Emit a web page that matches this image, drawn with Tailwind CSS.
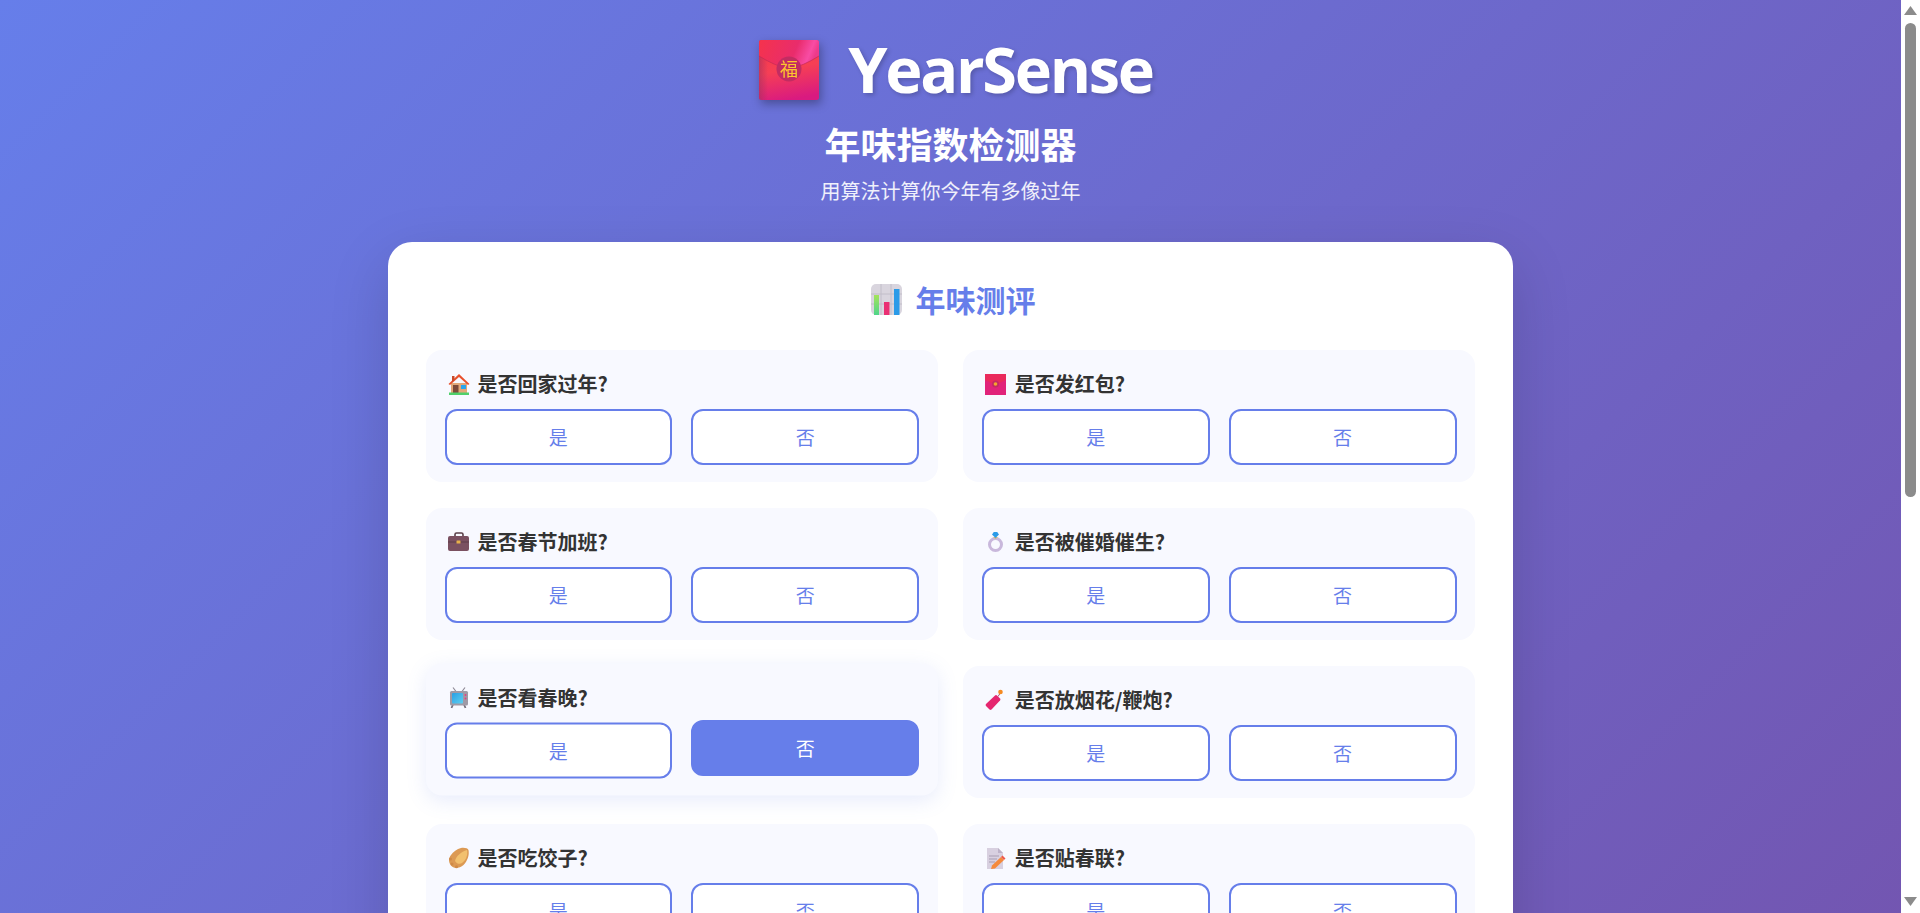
<!DOCTYPE html>
<html lang="zh-CN">
    <head>
        <meta charset="UTF-8" />
        <meta name="viewport" content="width=device-width, initial-scale=1.0" />
        <title>YearSense</title>
        <script src="https://cdn.jsdelivr.net/npm/@tailwindcss/browser@4"></script>
    </head>
    <body class="h-[913px] overflow-hidden bg-white font-['Noto_Sans_CJK_SC',sans-serif]">
        <svg width="0" height="0" class="absolute">
            <defs>
                <linearGradient id="envBody" x1="0.3" y1="0" x2="0.5" y2="1">
                    <stop offset="0" stop-color="#f8384a" />
                    <stop offset="0.5" stop-color="#f63f55" />
                    <stop offset="1" stop-color="#d91a80" />
                </linearGradient>
                <linearGradient id="envFlap" x1="0" y1="0" x2="1" y2="0.2">
                    <stop offset="0" stop-color="#f5334c" />
                    <stop offset="0.65" stop-color="#e92c6c" />
                    <stop offset="0.9" stop-color="#f84ca4" />
                    <stop offset="1" stop-color="#ee3a8a" />
                </linearGradient>
                <linearGradient id="envEdge" x1="0" y1="0" x2="1" y2="0">
                    <stop offset="0" stop-color="#a03060" stop-opacity="0.55" />
                    <stop offset="1" stop-color="#a03060" stop-opacity="0" />
                </linearGradient>
                <linearGradient id="barGreen" x1="0" y1="0" x2="0" y2="1">
                    <stop offset="0" stop-color="#a4e35a" />
                    <stop offset="1" stop-color="#4fd58a" />
                </linearGradient>
                <linearGradient id="screenBlue" x1="0" y1="0" x2="1" y2="1">
                    <stop offset="0" stop-color="#2a9fe4" />
                    <stop offset="1" stop-color="#5fd0f0" />
                </linearGradient>
            </defs>
        </svg>
        <div class="flex h-[913px] overflow-hidden">
            <main class="flex-1 min-w-0 overflow-hidden">
                <div class="min-h-[1670px] bg-[linear-gradient(135deg,#667eea_0%,#764ba2_100%)] pt-[33px]">
                    <header class="flex flex-col items-center">
                        <div class="flex h-[74px] items-center pl-[11px]">
                            <svg class="w-[60px] h-[60px] drop-shadow-[2px_4px_5px_rgba(0,0,0,0.3)]" viewBox="0 0 60 60">
                                <rect width="60" height="60" rx="2.500" fill="url(#envBody)" />
                                <rect width="9" height="60" rx="2.500" fill="url(#envEdge)" />
                                <path d="M0 2.500A2.500 2.500 0 0 1 2.500 0h55A2.500 2.500 0 0 1 60 2.500V16Q44 26 30 29 16 26 0 16z" fill="url(#envFlap)" />
                                <path d="M0 16Q16 26 30 29 44 26 60 16" fill="none" stroke="#c42a55" stroke-width="0.7" />
                                <circle cx="30" cy="29" r="12.500" fill="#c22c62" />
                                <text x="30" y="36" text-anchor="middle" font-size="18" fill="#fcc72e" font-family="Noto Sans CJK SC">福</text>
                            </svg>
                            <h1 class="mb-[3px] ml-[29px] font-['Open_Sans',sans-serif] text-[63px] leading-[74px] font-bold tracking-[-2.3px] text-white [text-shadow:2px_2px_4px_rgba(0,0,0,0.2)]">YearSense</h1>
                        </div>
                        <h2 class="mt-[11px] h-[51px] text-[36px] leading-[51px] font-bold text-white">年味指数检测器</h2>
                        <p class="mt-[7px] h-[30px] text-[20px] leading-[30px] text-white/90">用算法计算你今年有多像过年</p>
                    </header>

                    <section class="mx-auto mt-[36px] w-[1125px] min-h-[1300px] rounded-[24px] bg-white p-[38px] shadow-[0_20px_60px_rgba(0,0,0,0.15)]">
                        <h3 class="mb-[32px] flex h-[38px] items-center justify-center gap-[14px] pl-[5px] text-[30px] font-bold text-[#667eea]">
                            <svg class="w-[31px] h-[31px]" viewBox="0 0 31 31">
                                <rect width="31" height="31" rx="5" fill="#d9d5de" />
                                <path d="M0 10h31M0 20h31M10 0v31M20 0v31" stroke="#c2bec9" stroke-width="1" />
                                <path d="M3 11h5v20H3z" fill="url(#barGreen)" />
                                <path d="M13 18h5.500v13H13z" fill="#ea2f73" />
                                <path d="M23 5h5.500v26H23z" fill="#2a9be8" />
                            </svg>
                            <span>年味测评</span>
                        </h3>

                        <div class="grid grid-cols-2 gap-x-[25.6px] gap-y-[26px]">
                            <div class="rounded-[16px] bg-[#f8f9ff] px-[18.5px] pt-[19px] pb-[17px]">
                                <div class="mb-[11px] flex h-[29px] items-center text-[20px] font-bold text-[#333]">
                                    <svg class="ml-[3px] mr-[8px] w-[22px] h-[22px]" viewBox="0 0 22 22">
                                        <path d="M3 21V10h16v11z" fill="#e3a878" />
                                        <path d="M0.500 11L11 1l10.500 10-1.500 1L11 4 2 12z" fill="#e8502c" />
                                        <path d="M4 3h2.500v4L4 9z" fill="#c94a2a" />
                                        <path d="M5 12h5.500v8.500H5z" fill="#7c4a3a" />
                                        <path d="M13 12h5v4h-5z" fill="#2ba6ee" />
                                        <path d="M1 19.500h20V22H1z" fill="#4fd06a" />
                                    </svg>
                                    <span>是否回家过年?</span>
                                </div>
                                <div class="grid grid-cols-2 gap-[19.2px]">
                                    <button class="h-[56px] rounded-[12px] border-2 border-[#667eea] bg-white text-[19px] text-[#667eea]">是</button>
                                    <button class="h-[56px] rounded-[12px] border-2 border-[#667eea] bg-white text-[19px] text-[#667eea]">否</button>
                                </div>
                            </div>
                            <div class="rounded-[16px] bg-[#f8f9ff] px-[18.5px] pt-[19px] pb-[17px]">
                                <div class="mb-[11px] flex h-[29px] items-center text-[20px] font-bold text-[#333]">
                                    <svg class="ml-[3px] mr-[8px] w-[22px] h-[22px]" viewBox="0 0 22 22">
                                        <rect y="1" width="21" height="21" fill="#e1237a" />
                                        <path d="M0 1h21v6l-10.500 5L0 7z" fill="#ea2a5c" />
                                        <circle cx="10.500" cy="11" r="3.500" fill="#c22c62" />
                                        <circle cx="10.500" cy="11" r="1.800" fill="#f5a62c" />
                                    </svg>
                                    <span>是否发红包?</span>
                                </div>
                                <div class="grid grid-cols-2 gap-[19.2px]">
                                    <button class="h-[56px] rounded-[12px] border-2 border-[#667eea] bg-white text-[19px] text-[#667eea]">是</button>
                                    <button class="h-[56px] rounded-[12px] border-2 border-[#667eea] bg-white text-[19px] text-[#667eea]">否</button>
                                </div>
                            </div>
                            <div class="rounded-[16px] bg-[#f8f9ff] px-[18.5px] pt-[19px] pb-[17px]">
                                <div class="mb-[11px] flex h-[29px] items-center text-[20px] font-bold text-[#333]">
                                    <svg class="ml-[3px] mr-[8px] w-[22px] h-[22px]" viewBox="0 0 22 22">
                                        <path d="M7 6V3.500A1.500 1.500 0 0 1 8.500 2h5A1.500 1.500 0 0 1 15 3.500V6" fill="none" stroke="#5a3f48" stroke-width="1.600" />
                                        <rect y="5" width="21" height="15" rx="2" fill="#7a5060" />
                                        <path d="M0 11h21" stroke="#5c3d49" stroke-width="1" />
                                        <rect x="8.500" y="9.500" width="4" height="3" rx="0.500" fill="#e8b04a" />
                                    </svg>
                                    <span>是否春节加班?</span>
                                </div>
                                <div class="grid grid-cols-2 gap-[19.2px]">
                                    <button class="h-[56px] rounded-[12px] border-2 border-[#667eea] bg-white text-[19px] text-[#667eea]">是</button>
                                    <button class="h-[56px] rounded-[12px] border-2 border-[#667eea] bg-white text-[19px] text-[#667eea]">否</button>
                                </div>
                            </div>
                            <div class="rounded-[16px] bg-[#f8f9ff] px-[18.5px] pt-[19px] pb-[17px]">
                                <div class="mb-[11px] flex h-[29px] items-center text-[20px] font-bold text-[#333]">
                                    <svg class="ml-[3px] mr-[8px] w-[22px] h-[22px]" viewBox="0 0 22 22">
                                        <circle cx="10.500" cy="13.500" r="6" fill="none" stroke="#c9b8dc" stroke-width="3" />
                                        <path d="M8 6h5l-2.500 2z" fill="#d8b868" />
                                        <path d="M7 3.500L8.800 1h3.400L14 3.500l-3.500 3.500z" fill="#2a9be8" />
                                    </svg>
                                    <span>是否被催婚催生?</span>
                                </div>
                                <div class="grid grid-cols-2 gap-[19.2px]">
                                    <button class="h-[56px] rounded-[12px] border-2 border-[#667eea] bg-white text-[19px] text-[#667eea]">是</button>
                                    <button class="h-[56px] rounded-[12px] border-2 border-[#667eea] bg-white text-[19px] text-[#667eea]">否</button>
                                </div>
                            </div>
                            <div class="-translate-y-[2.5px] rounded-[16px] bg-[#f8f9ff] px-[18.5px] pt-[19px] pb-[17px] shadow-[0_5px_20px_rgba(102,126,234,0.15)]">
                                <div class="mb-[11px] flex h-[29px] items-center text-[20px] font-bold text-[#333]">
                                    <svg class="ml-[3px] mr-[8px] w-[22px] h-[22px]" viewBox="0 0 22 22">
                                        <path d="M8 5L5 1M14 5l3-4" stroke="#8f8a96" stroke-width="1.200" fill="none" />
                                        <path d="M5 18l-1.500 3.500M16 18l1.500 3.500" stroke="#77727e" stroke-width="1.800" fill="none" />
                                        <rect x="2" y="4.500" width="18" height="14.500" rx="1.500" fill="#9f9aa6" />
                                        <rect x="4" y="6.500" width="11" height="10.500" rx="1" fill="url(#screenBlue)" />
                                        <circle cx="17.500" cy="8.500" r="0.900" fill="#ec3a80" />
                                        <circle cx="17.500" cy="12" r="0.900" fill="#ec3a80" />
                                    </svg>
                                    <span>是否看春晚?</span>
                                </div>
                                <div class="grid grid-cols-2 gap-[19.2px]">
                                    <button class="h-[56px] rounded-[12px] border-2 border-[#667eea] bg-white text-[19px] text-[#667eea]">是</button>
                                    <button class="h-[56px] -translate-y-[2.5px] rounded-[12px] border-2 border-[#667eea] bg-[#667eea] text-[19px] text-white">否</button>
                                </div>
                            </div>
                            <div class="rounded-[16px] bg-[#f8f9ff] px-[18.5px] pt-[19px] pb-[17px]">
                                <div class="mb-[11px] flex h-[29px] items-center text-[20px] font-bold text-[#333]">
                                    <svg class="ml-[3px] mr-[8px] w-[22px] h-[22px]" viewBox="0 0 22 22">
                                        <path d="M1 15L10 6.500a1.500 1.500 0 0 1 2 0l3 3a1.500 1.500 0 0 1 0 2L6.500 20.500a1.500 1.500 0 0 1-2 0l-3.500-3.500a1.500 1.500 0 0 1 0-2z" fill="#e5266f" />
                                        <path d="M13 7.500l2-3" stroke="#b0526a" stroke-width="1" fill="none" />
                                        <circle cx="15.500" cy="3" r="2.300" fill="#f58a22" />
                                    </svg>
                                    <span>是否放烟花/鞭炮?</span>
                                </div>
                                <div class="grid grid-cols-2 gap-[19.2px]">
                                    <button class="h-[56px] rounded-[12px] border-2 border-[#667eea] bg-white text-[19px] text-[#667eea]">是</button>
                                    <button class="h-[56px] rounded-[12px] border-2 border-[#667eea] bg-white text-[19px] text-[#667eea]">否</button>
                                </div>
                            </div>
                            <div class="rounded-[16px] bg-[#f8f9ff] px-[18.5px] pt-[19px] pb-[17px]">
                                <div class="mb-[11px] flex h-[29px] items-center text-[20px] font-bold text-[#333]">
                                    <svg class="ml-[3px] mr-[8px] w-[22px] h-[22px]" viewBox="0 0 22 22">
                                        <path d="M8 21C4 21 1 17 1 13c0-2 1-4 2-5 2-3 6-6 10-7 3-.5 7 0 7.500 2 1 5-1 11-5 15-2 2-5 3-7.500 3z" fill="#dc9a54" />
                                        <path d="M7 14C8 9 13 5 19 3c1 5-1 10-5 13-2 1.500-5 1-7-2z" fill="#f2c06e" />
                                        <circle cx="2.500" cy="12" r="1.500" fill="#cf8a48" />
                                        <circle cx="4" cy="17" r="1.500" fill="#cf8a48" />
                                        <circle cx="8.500" cy="19.800" r="1.500" fill="#cf8a48" />
                                    </svg>
                                    <span>是否吃饺子?</span>
                                </div>
                                <div class="grid grid-cols-2 gap-[19.2px]">
                                    <button class="h-[56px] rounded-[12px] border-2 border-[#667eea] bg-white text-[19px] text-[#667eea]">是</button>
                                    <button class="h-[56px] rounded-[12px] border-2 border-[#667eea] bg-white text-[19px] text-[#667eea]">否</button>
                                </div>
                            </div>
                            <div class="rounded-[16px] bg-[#f8f9ff] px-[18.5px] pt-[19px] pb-[17px]">
                                <div class="mb-[11px] flex h-[29px] items-center text-[20px] font-bold text-[#333]">
                                    <svg class="ml-[3px] mr-[8px] w-[22px] h-[22px]" viewBox="0 0 22 22">
                                        <path d="M2 1h11l5 5v16H2z" fill="#d8d0e0" />
                                        <path d="M13 1l5 5h-5z" fill="#bdb2c8" />
                                        <path d="M4 9h10M4 12h8M4 15h6" stroke="#a89db2" stroke-width="1" />
                                        <path d="M6 22l1-3.500L16 10l3 3-9 8.500z" fill="#f58a3c" />
                                        <path d="M16 10l1.500-1.500 3 3L19 13z" fill="#ee5a4a" />
                                    </svg>
                                    <span>是否贴春联?</span>
                                </div>
                                <div class="grid grid-cols-2 gap-[19.2px]">
                                    <button class="h-[56px] rounded-[12px] border-2 border-[#667eea] bg-white text-[19px] text-[#667eea]">是</button>
                                    <button class="h-[56px] rounded-[12px] border-2 border-[#667eea] bg-white text-[19px] text-[#667eea]">否</button>
                                </div>
                            </div>
                        </div>
                    </section>
                </div>
            </main>

            <!-- page scrollbar as the screenshot shows it -->
            <aside class="flex w-[19px] shrink-0 flex-col items-center bg-white">
                <svg class="mt-[6px] w-[13px] h-[9px]" viewBox="0 0 13 9"><path d="M6.500 0L13 9H0z" fill="#8b8b8b" /></svg>
                <div class="mt-[8px] h-[474px] w-[11px] rounded-full bg-[#8b8b8b]"></div>
                <svg class="mt-auto mb-[7px] w-[13px] h-[9px]" viewBox="0 0 13 9"><path d="M0 0h13L6.500 9z" fill="#8b8b8b" /></svg>
            </aside>
        </div>
    </body>
</html>
